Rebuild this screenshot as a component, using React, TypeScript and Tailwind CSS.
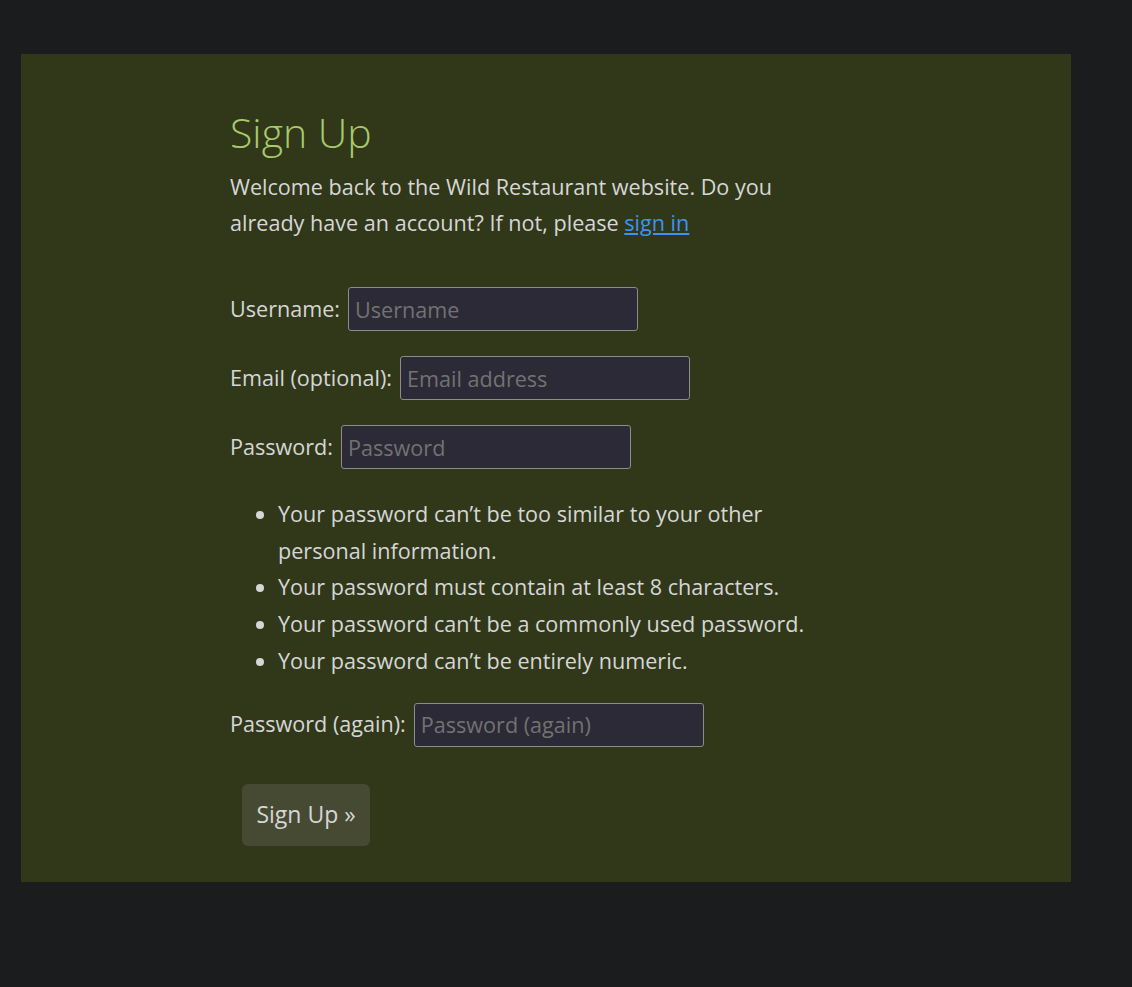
import React from 'react'

const rules = [
  'Your password can’t be too similar to your other personal information.',
  'Your password must contain at least 8 characters.',
  'Your password can’t be a commonly used password.',
  'Your password can’t be entirely numeric.',
]

function Field({ label, placeholder, type = 'text' }: { label: string; placeholder: string; type?: string }) {
  return (
    <div className="flex items-center">
      <label className="mr-[8px] whitespace-nowrap">{label}</label>
      <input
        type={type}
        placeholder={placeholder}
        className="w-[290px] h-[44px] px-[6px] bg-[#2b2a36] border border-[#8c8c8c] rounded-[3px] text-[21.6px] text-[#d4d4d4] placeholder:text-[#727272] outline-none"
      />
    </div>
  )
}

export default function App() {
  return (
    <div
      className="min-h-[987px] bg-[#1b1c1e] pt-[54px] pl-[21px] text-[#d6d6d6] text-[21.6px]"
      style={{ fontFamily: '"Open Sans", "Noto Sans", sans-serif' }}
    >
      <div className="w-[1050px] bg-[#303819] pt-[54px] pb-[36px]">
        <div className="w-[632px] mx-auto">
          <h1 className="text-[41px] font-light leading-[48px] text-[#a8c96c]">Sign Up</h1>
          <p className="mt-[13px] leading-[36px] max-w-[590px]">
            Welcome back to the Wild Restaurant website. Do you already have an account? If not, please{' '}
            <a href="#" className="text-[#3b95f0] underline">sign in</a>
          </p>

          <form className="mt-[46px]">
            <div className="flex flex-col gap-[25px]">
              <Field label="Username:" placeholder="Username" />
              <Field label="Email (optional):" placeholder="Email address" type="email" />
              <Field label="Password:" placeholder="Password" type="password" />
            </div>

            <ul className="mt-[27px] pl-[48px] list-disc leading-[36.7px]">
              {rules.map(r => (
                <li key={r} className="max-w-[540px]">{r}</li>
              ))}
            </ul>

            <div className="mt-[23px]">
              <Field label="Password (again):" placeholder="Password (again)" type="password" />
            </div>

            <button
              type="button"
              className="mt-[37px] ml-[12px] w-[128px] h-[62px] rounded-[6px] bg-[#474a33] text-[#d6d6d6] text-[23px]"
            >
              Sign Up »
            </button>
          </form>
        </div>
      </div>
    </div>
  )
}
